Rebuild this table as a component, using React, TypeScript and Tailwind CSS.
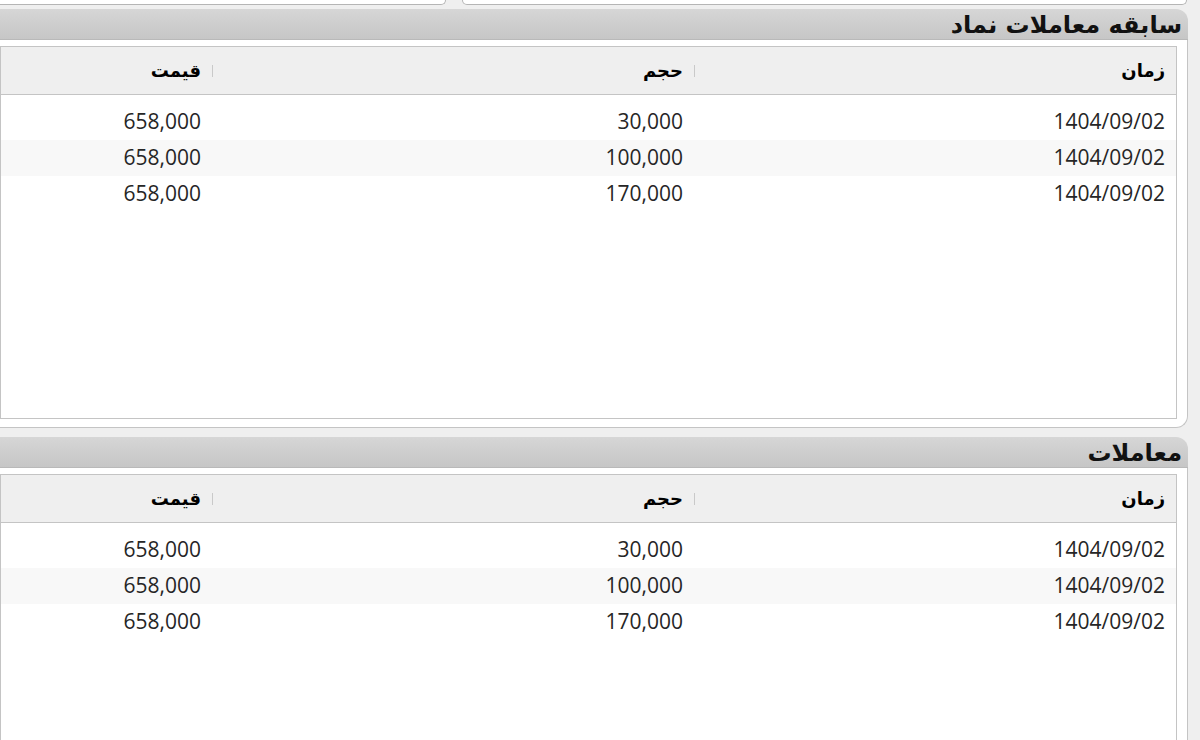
import React from "react";

type Trade = { time: string; volume: string; price: string };

const trades: Trade[] = [
    { time: "1404/09/02", volume: "30,000", price: "658,000" },
    { time: "1404/09/02", volume: "100,000", price: "658,000" },
    { time: "1404/09/02", volume: "170,000", price: "658,000" },
];

const columns = ["زمان", "حجم", "قیمت"];

const faFont = { fontFamily: '"DejaVu Sans", sans-serif' };
const numFont = { fontFamily: '"Open Sans", "Liberation Sans", sans-serif' };

const TradeGrid: React.FC<{ rows: Trade[] }> = ({ rows }) => (
    <div className="flex-1 flex flex-col border border-[#c4c4c4] bg-white overflow-hidden">
        <div className="h-[48px] shrink-0 flex bg-[#efefef] border-b border-[#c4c4c4]">
            {columns.map((c) => (
                <div key={c} className="w-[482px] shrink-0 flex items-center justify-between pr-[11px]">
                    <span className="text-[18px] font-bold text-black" style={faFont}>
                        {c}
                    </span>
                    <span className="w-px h-[12px] bg-[#c9c9c9]" />
                </div>
            ))}
        </div>
        <div className="pt-[9px] flex flex-col">
            {rows.map((r, i) => (
                <div key={i} className={`h-[36px] flex ${i % 2 === 1 ? "bg-[#f8f8f8]" : "bg-white"}`}>
                    {[r.time, r.volume, r.price].map((v, j) => (
                        <div key={j} className="w-[482px] shrink-0 flex items-center pr-[11px]">
                            <span dir="ltr" className="text-[21px] text-[#262626]" style={numFont}>
                                {v}
                            </span>
                        </div>
                    ))}
                </div>
            ))}
        </div>
    </div>
);

const Panel: React.FC<{ title: string; rows: Trade[] }> = ({ title, rows }) => (
    <section className="h-[419px] shrink-0 flex flex-col mr-[12px]">
        <div className="h-[31px] shrink-0 flex items-center pr-[6px] pt-[2px] rounded-tr-[12px] bg-gradient-to-b from-[#d6d6d6] to-[#c6c6c6] border-b border-[#b9b9b9]">
            <h2 className="text-[24px] font-bold text-[#111] leading-none" style={faFont}>
                {title}
            </h2>
        </div>
        <div className="flex-1 flex flex-col pt-[6px] pr-[10px] pb-[8px] bg-white border-r border-b border-[#c4c4c4] rounded-br-[12px]">
            <TradeGrid rows={rows} />
        </div>
    </section>
);

export default function App() {
    return (
        <div dir="rtl" className="w-[1200px] h-[740px] overflow-hidden bg-[#efefef] flex flex-col">
            {/* bottoms of the panels above, cut off by the screenshot */}
            <div className="h-[5px] shrink-0 flex gap-[16px] mr-[13px]">
                <div className="w-[725px] shrink-0 bg-white border-x border-b border-[#b5b5b5] rounded-b-[8px]" />
                <div className="w-[800px] shrink-0 bg-white border-x border-b border-[#b5b5b5] rounded-b-[8px]" />
            </div>
            <div className="h-[4px] shrink-0" />
            <Panel title="سابقه معاملات نماد" rows={trades} />
            <div className="h-[9px] shrink-0" />
            <Panel title="معاملات" rows={trades} />
        </div>
    );
}
